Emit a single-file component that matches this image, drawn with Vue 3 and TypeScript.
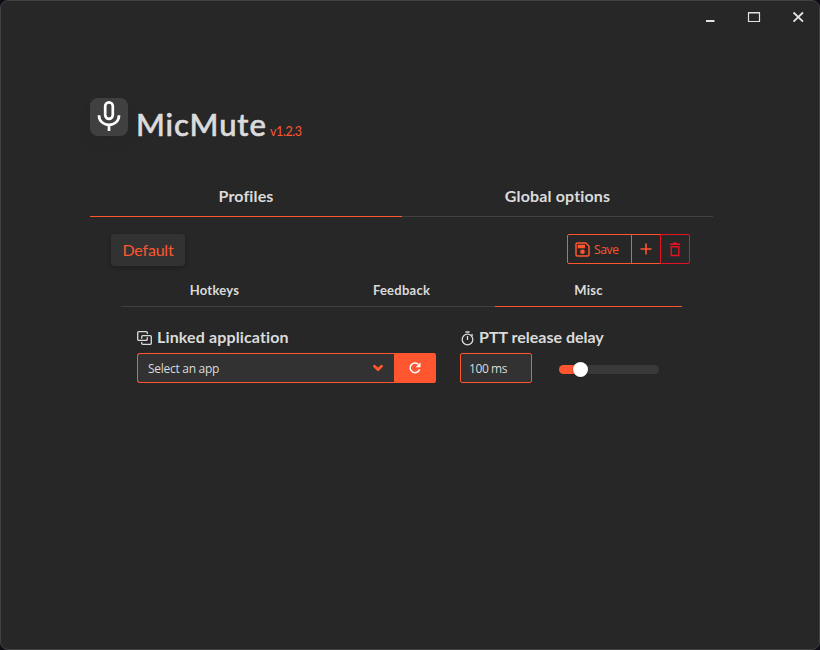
<script setup lang="ts">
import { computed, ref } from 'vue'

type MainTab = 'Profiles' | 'Global options'
type ProfileTab = 'Hotkeys' | 'Feedback' | 'Misc'

const version = 'v1.2.3'
const mainTabs: MainTab[] = ['Profiles', 'Global options']
const profileTabs: ProfileTab[] = ['Hotkeys', 'Feedback', 'Misc']
const activeMain = ref<MainTab>('Profiles')
const activeProfileTab = ref<ProfileTab>('Misc')
const delay = ref<number>(100)
const maxDelay = 600
const fill = computed(() => `${11 + (delay.value / maxDelay) * 64}px`)
</script>

<template>
  <div class="window">
    <div class="titlebar">
      <button class="win-btn" aria-label="Minimize">
        <svg width="44" height="34" viewBox="0 0 44 34"><path d="M18 21h8.500" stroke="#e2e2e2" stroke-width="2" /></svg>
      </button>
      <button class="win-btn" aria-label="Maximize">
        <svg width="44" height="34" viewBox="0 0 44 34"><path d="M16.500 13v8.500h11V13" fill="none" stroke="#e2e2e2" stroke-width="1.200" /><path d="M16 12.800h12" stroke="#e2e2e2" stroke-width="1.600" /></svg>
      </button>
      <button class="win-btn" aria-label="Close">
        <svg width="44" height="34" viewBox="0 0 44 34"><path d="M17.500 12.500l9.500 9.200M27 12.500l-9.500 9.200" stroke="#e2e2e2" stroke-width="1.800" /></svg>
      </button>
    </div>

    <main class="content">
      <header class="brand">
        <div class="logo">
          <svg width="38" height="38" viewBox="0 0 38 38" fill="none" stroke="#fff" stroke-width="2.700">
            <rect x="15.200" y="4.300" width="7.600" height="16.600" rx="3.800" />
            <path d="M9 17.200c0 5.600 4.200 9.700 10 9.700s10-4.100 10-9.700M19 27v6" />
          </svg>
        </div>
        <h1 class="name">MicMute</h1>
        <span class="version">{{ version }}</span>
      </header>

      <nav class="tabs main-tabs">
        <a v-for="t in mainTabs" :key="t" class="tab" :class="{ active: t === activeMain }" @click="activeMain = t"><span>{{ t }}</span></a>
      </nav>

      <section class="toolbar">
        <div class="profile">Default</div>
        <div class="actions">
          <button class="action save">
            <svg width="15" height="15" viewBox="0 0 15 15">
              <path d="M2.200 1h8.600L14 4.200v8.600a1.200 1.200 0 0 1-1.200 1.200H2.200A1.200 1.200 0 0 1 1 12.800V2.200A1.200 1.200 0 0 1 2.200 1z" fill="none" stroke="currentColor" stroke-width="1.500" />
              <path d="M2.700 2.700h7.300v3.500H2.700z" fill="currentColor" /><circle cx="7.500" cy="9.800" r="2.300" fill="currentColor" />
            </svg>
            <span>Save</span>
          </button>
          <button class="action add" aria-label="Add profile">
            <svg width="12" height="12" viewBox="0 0 12 12"><path d="M6 .5v11M.5 6h11" stroke="currentColor" stroke-width="1.600" /></svg>
          </button>
          <button class="action remove" aria-label="Delete profile">
            <svg width="12" height="15" viewBox="0 0 12 15" fill="none" stroke="currentColor" stroke-width="1.400"><path d="M.8 2.200h10.400M4 1.100h4M2.200 4.700h7.600v8.800H2.200z" /></svg>
          </button>
        </div>
      </section>

      <nav class="tabs sub-tabs">
        <a v-for="t in profileTabs" :key="t" class="tab" :class="{ active: t === activeProfileTab }" @click="activeProfileTab = t"><span>{{ t }}</span></a>
      </nav>

      <section class="fields">
        <div class="field linked">
          <div class="label">
            <svg width="15" height="14" viewBox="0 0 15 14" fill="none" stroke="currentColor" stroke-width="1.300">
              <path d="M10.300 3V1.800A1.100 1.100 0 0 0 9.200.7H1.800A1.100 1.100 0 0 0 .7 1.800v6.500a1.100 1.100 0 0 0 1.100 1.100h7.400a1.100 1.100 0 0 0 1.100-1.100V6.200" />
              <path d="M4.700 7.800V5.700a1.100 1.100 0 0 1 1.100-1.100h7.400a1.100 1.100 0 0 1 1.100 1.100v6.500a1.100 1.100 0 0 1-1.100 1.100H5.800a1.100 1.100 0 0 1-1.100-1.100V11" />
            </svg>
            <span class="linked-text">Linked application</span>
          </div>
          <div class="combo">
            <div class="select">
              <span>Select an app</span>
              <svg width="10" height="8" viewBox="0 0 10 8"><path d="M1.500 2.200L5 5.500l3.500-3.300" fill="none" stroke="#ff5630" stroke-width="2.800" stroke-linecap="round" /></svg>
            </div>
            <button class="refresh" aria-label="Refresh">
              <svg width="12" height="12" viewBox="0 0 12 12"><path d="M9.500 2.600A4.800 4.800 0 1 0 10.600 7.200" fill="none" stroke="#fff" stroke-width="1.500" /><path d="M11.500.5v4.800H6.700z" fill="#fff" /></svg>
            </button>
          </div>
        </div>

        <div class="field delay">
          <div class="label">
            <svg width="14" height="15" viewBox="0 0 14 15" fill="none" stroke="currentColor" stroke-width="1.300"><circle cx="7.500" cy="8.500" r="5.300" /><path d="M5.400 1h4.200M7.500 4.900v4M11.500 3.300l1.300 1.200" /></svg>
            <span class="delay-text">PTT release delay</span>
          </div>
          <div class="delay-row">
            <div class="value">{{ delay }} ms</div>
            <div class="slider">
              <div class="progress" :style="{ width: fill }"><i class="thumb"></i></div>
            </div>
          </div>
        </div>
      </section>
    </main>
  </div>
</template>

<style>
body { background: #100c16; overflow: hidden; }
</style>

<style scoped>
* { box-sizing: border-box; }
.window { width: 820px; height: 650px; background: #272727; border: 1px solid #414141; border-radius: 8px; color: #dbdbdb; font-family: "Open Sans", "Noto Sans", sans-serif; font-size: 12px; overflow: hidden; }
button { appearance: none; border: 0; background: none; padding: 0; margin: 0; font: inherit; color: inherit; }
svg { display: block; flex: none; }
.titlebar { display: flex; justify-content: flex-end; height: 33px; margin-top: -1px; margin-right: -1px; }
.win-btn { width: 44px; height: 34px; }
.content { width: 624px; margin-left: 89px; padding-top: 65px; }
.brand { display: flex; height: 53px; }
.logo { width: 38px; height: 38px; border-radius: 8px; background: #404040; box-shadow: 0 8px 16px rgba(0,0,0,.04); }
.name { margin: 6px 0 0 8px; font: 500 31px/40px Lato, sans-serif; width: 134px; letter-spacing: .9px; -webkit-text-stroke: .6px currentColor; white-space: nowrap; }
.version { margin-top: 25px; font: 12.500px/18px Lato, sans-serif; color: #ff5630; letter-spacing: -.4px; }
.tabs { display: flex; }
.tab { flex: 1; display: flex; justify-content: center; border-bottom: 1px solid #404040; white-space: nowrap; }
.tab.active { border-color: #ff5630; }
.main-tabs { margin-top: 25px; width: 623px; height: 41px; font: 700 16px/40px Lato, sans-serif; letter-spacing: .15px; }
.main-tabs .tab.active { flex: 0 0 312px; }
.toolbar { display: flex; justify-content: space-between; padding: 17px 24px 0 21px; height: 57px; }
.profile { width: 74px; height: 32px; border-radius: 4px; background: #323232; box-shadow: 0 2px 4px rgba(0,0,0,.25); color: #ff5630; text-align: center; font: 16px/32px Lato, sans-serif; letter-spacing: -.2px; }
.actions { display: flex; height: 30px; color: #ff5630; }
.action { display: flex; align-items: center; justify-content: center; border: 1px solid #ff5630; height: 30px; }
.save { width: 65px; border-radius: 2px 0 0 2px; justify-content: flex-start; gap: 4px; padding-left: 7px; letter-spacing: -.35px; }
.save span { padding-top: 1px; }
.add { width: 30px; margin-left: -1px; }
.remove { width: 30px; margin-left: -1px; color: #e81123; border-color: #e81123; border-radius: 0 2px 2px 0; }
.sub-tabs { margin: 0 31px; width: 561px; height: 33px; font: 700 13px/33px Lato, sans-serif; letter-spacing: .25px; }
.fields { display: flex; padding: 21px 0 0 47px; gap: 24px; }
.linked { width: 299px; }
.label { display: flex; align-items: center; gap: 5px; height: 20px; font: 700 16px/20px Lato, sans-serif; }
.label span { margin-top: -2px; }
.linked-text { letter-spacing: .13px; }
.combo { display: flex; margin-top: 5px; height: 30px; }
.select { width: 257px; display: flex; align-items: center; justify-content: space-between; padding: 0 11px 0 10px; border: 1px solid #ff5630; border-right: 0; border-radius: 3px 0 0 3px; background: #323232; letter-spacing: -.28px; }
.select span { padding-top: 1px; }
.refresh { width: 42px; background: #ff5630; border-radius: 0 2px 2px 0; display: flex; align-items: center; justify-content: center; }
.delay-row { display: flex; align-items: center; margin-top: 5px; height: 30px; gap: 27px; }
.value { width: 72px; height: 30px; padding-left: 8px; line-height: 30px; border: 1px solid #ff5630; border-radius: 2px; background: #323232; letter-spacing: -.4px; }
.slider { width: 100px; height: 9px; margin-top: 3px; border-radius: 5px; background: #393939; }
.progress { height: 9px; border-radius: 5px; background: #ff5630; position: relative; }
.thumb { position: absolute; right: -7px; top: -3px; width: 15px; height: 15px; border-radius: 50%; background: #fff; box-shadow: 0 0 2px rgba(0,0,0,.5); }
</style>
